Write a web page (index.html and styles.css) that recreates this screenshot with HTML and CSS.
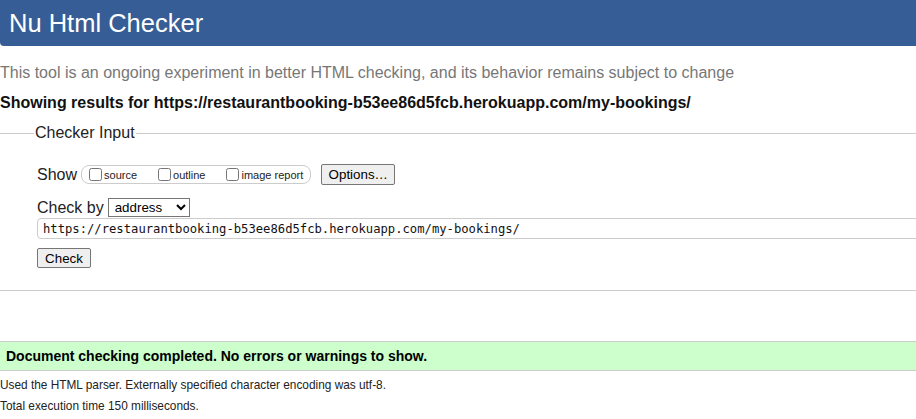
FILE: index.html
```html
<!DOCTYPE html>
<html lang="en">
<head>
<meta charset="utf-8">
<title>Nu Html Checker</title>
<link rel="stylesheet" href="styles.css">
</head>
<body>
<h1 class="title">Nu Html Checker</h1>
<p class="intro">This tool is an ongoing experiment in better HTML checking, and its behavior remains subject to change</p>
<p class="showing">Showing results for https://restaurantbooking-b53ee86d5fcb.herokuapp.com/my-bookings/</p>
<form class="form">
  <fieldset class="checker">
    <legend class="legend">Checker Input</legend>
    <div class="row row-show">
      <span class="label">Show</span>
      <span class="group">
        <label class="opt"><input type="checkbox" class="cb"><span>source</span></label>
        <label class="opt"><input type="checkbox" class="cb"><span>outline</span></label>
        <label class="opt"><input type="checkbox" class="cb"><span>image report</span></label>
      </span>
      <button type="button" class="btn btn-options">Options…</button>
    </div>
    <div class="row row-by">
      <span class="label">Check by</span>
      <select class="select"><option>address</option></select>
    </div>
    <div class="row row-url">
      <input type="text" class="url" value="https://restaurantbooking-b53ee86d5fcb.herokuapp.com/my-bookings/">
    </div>
    <div class="row row-check">
      <button type="button" class="btn btn-check">Check</button>
    </div>
  </fieldset>
</form>
<p class="success">Document checking completed. No errors or warnings to show.</p>
<p class="details">Used the HTML parser. Externally specified character encoding was utf-8.</p>
<p class="details">Total execution time 150 milliseconds.</p>
</body>
</html>
```
FILE: styles.css
```css
html, body {
  margin: 0;
  padding: 0;
  background: #fff;
}
body {
  font-family: "Liberation Sans", Arial, sans-serif;
  color: #111;
  width: 916px;
  overflow: hidden;
}
.title {
  margin: 0;
  height: 46px;
  line-height: 46px;
  background: #365d95;
  color: #fff;
  font-size: 25.5px;
  font-weight: normal;
  padding-left: 9px;
  border-bottom-left-radius: 4px;
}
.intro {
  margin: 17px 0 0;
  font-size: 16px;
  line-height: 20px;
  color: #777;
}
.showing {
  margin: 10px 0 0;
  font-size: 16px;
  line-height: 20px;
  font-weight: bold;
  color: #111;
  white-space: nowrap;
}
.form {
  margin: 10px 0 0;
}
.checker {
  margin: 0;
  padding: 0 0 22px 37px;
  border: none;
  border-top: 1px solid #ccc;
  border-bottom: 1px solid #ccc;
  min-width: 0;
  overflow: hidden;
}
.legend {
  font-size: 16px;
  line-height: 20px;
  padding: 0 1px;
  margin-left: -3px;
  color: #222;
}
.row {
  display: flex;
  align-items: center;
  white-space: nowrap;
}
.row-show {
  margin-top: 21px;
  height: 21px;
}
.label {
  font-size: 16px;
  color: #222;
  margin-right: 4px;
}
.group {
  display: inline-flex;
  align-items: center;
  border: 1px solid #ccc;
  border-radius: 8px;
  height: 17px;
  padding: 0 7px 0 3px;
  flex: none;
}
.opt {
  display: inline-flex;
  align-items: center;
  font-size: 11px;
  color: #222;
  margin-right: 17px;
  white-space: nowrap;
}
.opt:last-child {
  margin-right: 0;
}
.cb {
  width: 13px;
  height: 13px;
  margin: 0 2px 0 4px;
}
.btn {
  font-family: "Liberation Sans", Arial, sans-serif;
  font-size: 13.33px;
  background: #efefef;
  border: 1px solid #767676;
  border-radius: 2px;
  color: #000;
  padding: 0 6px;
}
.btn-options {
  margin-left: 10px;
  height: 21px;
  width: 74px;
}
.row-by {
  margin-top: 12px;
  height: 21px;
}
.select {
  font-family: "Liberation Sans", Arial, sans-serif;
  font-size: 13.33px;
  width: 82px;
  height: 19px;
  margin-left: 0;
  border: 1px solid #767676;
  border-radius: 0;
  background: #fff;
  color: #000;
  padding: 0 2px;
}
.url {
  width: 1000px;
  flex: none;
  height: 21px;
  box-sizing: border-box;
  border: 1px solid #ccc;
  border-radius: 4px 0 0 4px;
  padding: 0 5px;
  font-family: "DejaVu Sans Mono", "Liberation Mono", monospace;
  font-size: 12.2px;
  color: #111;
  margin: 0;
}
.row-check {
  margin-top: 9px;
}
.btn-check {
  height: 20px;
  width: 54px;
  font-size: 13.33px;
}
.success {
  margin: 50px 0 0;
  background: #ccffcc;
  border-top: 1px solid #ccc;
  border-bottom: 1px solid #ccc;
  font-weight: bold;
  font-size: 14px;
  line-height: 28px;
  padding-left: 6px;
  color: #000;
}
.details {
  margin: 0;
  font-size: 11.85px;
  line-height: 21px;
  color: #222;
}
.success + .details {
  margin-top: 4px;
}
```
